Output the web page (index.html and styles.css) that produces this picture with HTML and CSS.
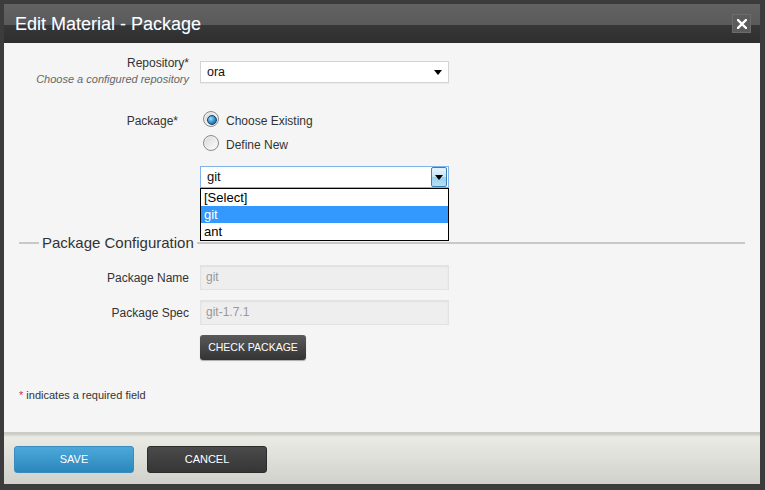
FILE: index.html
```html
<!DOCTYPE html>
<html>
<head>
<meta charset="utf-8">
<link rel="stylesheet" href="styles.css">
</head>
<body>
<div class="dialog">
  <div class="titlebar">
    <h1 class="title">Edit Material - Package</h1>
    <span class="close">
      <svg width="10" height="10" viewBox="0 0 10 10"><path d="M1 1L9 9M9 1L1 9" stroke="#fff" stroke-width="2.4" stroke-linecap="square"/></svg>
    </span>
  </div>
  <div class="content">
    <div class="row row-repo">
      <div class="label-block">
        <div class="label">Repository*</div>
        <div class="hint">Choose a configured repository</div>
      </div>
      <div class="select">ora<span class="caret"></span></div>
    </div>

    <div class="row row-pkg">
      <div class="label pkg-label">Package*</div>
      <div class="field-col">
        <div class="radio-line"><span class="radio checked"></span><span class="radio-text">Choose Existing</span></div>
        <div class="radio-line"><span class="radio"></span><span class="radio-text">Define New</span></div>
        <div class="combo">
          <div class="select focused">git<span class="combo-btn"><span class="caret"></span></span></div>
          <ul class="listbox">
            <li>[Select]</li>
            <li class="selected">git</li>
            <li>ant</li>
          </ul>
        </div>
      </div>
    </div>

    <div class="legend">
      <span class="line short"></span>
      <span class="legend-text">Package Configuration</span>
      <span class="line long"></span>
    </div>

    <div class="row row-input">
      <div class="label">Package Name</div>
      <div class="input">git</div>
    </div>
    <div class="row row-input">
      <div class="label">Package Spec</div>
      <div class="input">git-1.7.1</div>
    </div>
    <div class="row row-input">
      <div></div>
      <div><span class="btn-dark">CHECK PACKAGE</span></div>
    </div>

    <p class="required"><span class="ast">*</span> indicates a required field</p>
  </div>
  <div class="footer">
    <span class="btn save">SAVE</span>
    <span class="btn cancel">CANCEL</span>
  </div>
</div>
</body>
</html>
```
FILE: styles.css
```css
* { box-sizing: border-box; }
html, body { margin: 0; padding: 0; }
body {
  width: 765px;
  height: 490px;
  overflow: hidden;
  font-family: Arial, "Liberation Sans", sans-serif;
  color: #333;
}
.dialog {
  width: 765px;
  height: 490px;
  border-style: solid;
  border-color: #3c3c3c;
  border-width: 4px 5px 6px 4px;
  display: flex;
  flex-direction: column;
  background: #f5f5f5;
}
.titlebar {
  height: 39px;
  flex: none;
  display: flex;
  align-items: center;
  justify-content: space-between;
  padding: 0 9px 0 11px;
  background: linear-gradient(#626262 0, #5a5a5a 21px, #373737 21px, #2e2e2e 100%);
}
.title {
  margin: 0;
  font-size: 18px;
  font-weight: normal;
  color: #fff;
  line-height: 22px;
  padding-top: 1px;
  text-shadow: 0 0 1px rgba(120,170,255,0.35);
}
.close {
  width: 19px;
  height: 19px;
  background: #5c5c5c;
  border: 1px solid #6c6c6c;
  display: flex;
  align-items: center;
  justify-content: center;
}
.close svg { display: block; }

.content {
  flex: 1;
  padding-top: 18px;
  background: #f5f5f5;
}
.row {
  display: grid;
  grid-template-columns: 185px 249px;
  column-gap: 11px;
  align-items: start;
}
.label-block {
  text-align: right;
  margin-top: -6px;
}
.label {
  font-size: 12px;
  line-height: 16px;
  text-align: right;
  color: #333;
}
.hint {
  font-size: 11px;
  line-height: 16px;
  font-style: italic;
  color: #666;
}
.select {
  position: relative;
  height: 22px;
  background: #fff;
  border: 1px solid #d4d4d4;
  font-size: 12.5px;
  line-height: 20px;
  padding-left: 6px;
  color: #111;
  box-shadow: 0 1px 1px rgba(0,0,0,0.04);
}
.caret {
  position: absolute;
  right: 6px;
  top: 8px;
  width: 0;
  height: 0;
  border-left: 4.5px solid transparent;
  border-right: 4.5px solid transparent;
  border-top: 5px solid #000;
}
.row-pkg { margin-top: 24px; }
.pkg-label {
  padding-right: 11px;
  line-height: 20px;
}
.radio-line {
  display: flex;
  align-items: center;
  height: 16px;
  margin-bottom: 8px;
  padding-left: 3px;
}
.radio-text {
  font-size: 12px;
  padding-left: 7px;
  padding-top: 3px;
  color: #333;
}
.radio {
  position: relative;
  width: 16px;
  height: 16px;
  border-radius: 50%;
  border: 1px solid #8c8c8c;
  background: linear-gradient(135deg, #d4d4d4 0%, #f4f4f4 70%, #fff 100%);
  box-shadow: inset 0 0 0 1px #f0f0f0;
}
.radio.checked::after {
  content: "";
  position: absolute;
  left: 3px;
  top: 3px;
  width: 8px;
  height: 8px;
  border-radius: 50%;
  background: radial-gradient(circle at 35% 35%, #9fe0ff 0, #3a9ad0 45%, #134f7d 100%);
  border: 0.5px solid #123f66;
}
.combo {
  position: relative;
  margin-top: 15px;
}
.select.focused {
  font-size: 13px;
  border-color: #7eb4ea;
}
.combo-btn {
  position: absolute;
  right: 1px;
  top: 0;
  width: 16px;
  height: 20px;
  border: 1px solid #3c7fb1;
  border-radius: 2px;
  background: linear-gradient(#e5f4fc, #c4e5f6 50%, #98d1ef 51%, #b6e0f4);
}
.combo-btn .caret {
  right: 3px;
  top: 7px;
  border-left-width: 4px;
  border-right-width: 4px;
  border-top-width: 5px;
}
.listbox {
  position: absolute;
  left: 0;
  top: 22px;
  width: 249px;
  margin: 0;
  padding: 0;
  list-style: none;
  background: #fff;
  border: 1px solid #000;
  z-index: 5;
}
.listbox li {
  height: 17px;
  line-height: 17px;
  font-size: 13px;
  padding-left: 3px;
  color: #000;
}
.listbox li.selected {
  background: #3399ff;
  color: #fff;
}
.legend {
  display: flex;
  align-items: center;
  height: 18px;
  margin: 46px 15px 0 15px;
}
.line {
  height: 2px;
  background: #c8c8c8;
}
.line.short { width: 20px; }
.line.long { flex: 1; }
.legend-text {
  font-size: 15px;
  line-height: 18px;
  padding: 0 3px;
  color: #333;
}
.row-input {
  align-items: center;
  margin-top: 10px;
}
.legend + .row-input { margin-top: 13px; }
.input {
  height: 25px;
  background: #eeeeee;
  border: 1px solid #e2e2e2;
  box-shadow: inset 0 1px 2px rgba(0,0,0,0.06);
  font-size: 12px;
  line-height: 23px;
  padding-left: 5px;
  color: #999;
}
.btn-dark {
  display: inline-block;
  width: 106px;
  height: 25px;
  line-height: 25px;
  text-align: center;
  font-size: 10.5px;
  color: #fff;
  border-radius: 3px;
  background: linear-gradient(#5a5a5a, #333);
  box-shadow: 0 1px 1px rgba(0,0,0,0.3);
}
.required {
  margin: 28px 0 0 15px;
  font-size: 11px;
  line-height: 14px;
  color: #333;
}
.ast { color: #d33; }
.footer {
  height: 52px;
  flex: none;
  display: flex;
  gap: 13px;
  padding: 14px 0 0 10px;
  background: linear-gradient(#cbcbc6 0, #cdcdc8 2px, #ebebe6 5px, #d1d1cb 100%);
}
.btn {
  width: 120px;
  height: 27px;
  line-height: 27px;
  text-align: center;
  font-size: 11px;
  color: #fff;
  border-radius: 3px;
}
.save {
  background: linear-gradient(#4da8da, #2b86bb);
  border: 1px solid #3a8cc0;
  line-height: 25px;
}
.cancel {
  background: linear-gradient(#4a4a4a, #363636);
  border: 1px solid #2c2c2c;
  line-height: 25px;
}
```
